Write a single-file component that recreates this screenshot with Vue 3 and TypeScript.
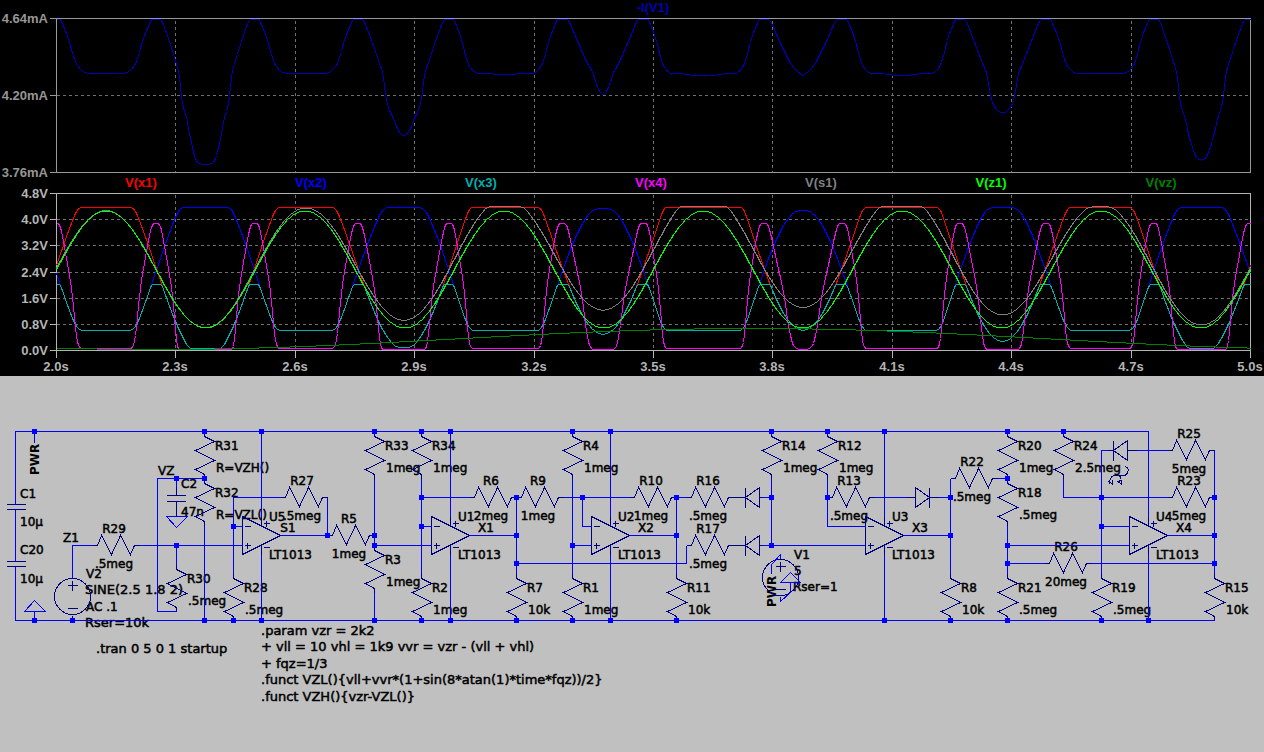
<script setup lang="ts">
type Pt = [number, number]

const X0 = 56
const X1 = 1250
const SECOND = 398

const timeTicks = [
  { x: 56, t: '2.0s' }, { x: 175, t: '2.3s' }, { x: 295, t: '2.6s' }, { x: 414, t: '2.9s' },
  { x: 534, t: '3.2s' }, { x: 653, t: '3.5s' }, { x: 772, t: '3.8s' }, { x: 892, t: '4.1s' },
  { x: 1011, t: '4.4s' }, { x: 1131, t: '4.7s' }, { x: 1250, t: '5.0s' },
]
const innerTicks = timeTicks.slice(1, -1)
const currentTicks = [{ y: 18, t: '4.64mA' }, { y: 95, t: '4.20mA' }, { y: 172, t: '3.76mA' }]
const voltTicks = [
  { y: 193, t: '4.8V' }, { y: 219, t: '4.0V' }, { y: 245, t: '3.2V' }, { y: 272, t: '2.4V' },
  { y: 298, t: '1.6V' }, { y: 324, t: '0.8V' }, { y: 350, t: '0.0V' },
]

/* Waveforms, expressed in canvas units (y grows downwards). */
const timeAt = (x: number) => 2 + (x - X0) / SECOND
const sine = (x: number) => 58.5 * Math.sin(4 * Math.PI * timeAt(x))
const drift = (x: number) => 10.5 + 10.5 * Math.sin((2 * Math.PI * timeAt(x)) / 3)
const drive = (x: number) => 1.6 * sine(x) + 1.5 * drift(x)

function smoothMax(a: number, b: number, k: number): number {
  const h = Math.max(k - Math.abs(a - b), 0) / k
  return Math.max(a, b) + (h * h * k) / 4
}
const smoothMin = (a: number, b: number, k: number) => -smoothMax(-a, -b, k)

function lookup(table: Pt[], v: number): number {
  if (v <= table[0][0]) return table[0][1]
  for (let i = 1; i < table.length; i++) {
    const [a, ya] = table[i - 1]
    const [b, yb] = table[i]
    if (v <= b) return ya + ((yb - ya) * (v - a)) / (b - a)
  }
  return table[table.length - 1][1]
}

const pulse: Pt[] = [[-62, 349], [-58, 345], [-53, 325], [-48, 300], [-43, 284], [-35, 266], [-21, 238], [-14, 227], [-8, 223],
  [8, 223], [14, 227], [21, 238], [35, 266], [43, 284], [50, 308], [55, 331], [60, 344], [66, 348]]
const supply: Pt[] = [[-93, 164], [-90, 162], [-88, 157], [-85, 146], [-82, 135], [-77, 118], [-72, 109], [-69, 102], [-67, 95],
  [-65, 85], [-62, 72], [-58, 66], [-50, 55], [-43, 46], [-32, 34], [-20, 22], [-14, 19], [14, 19], [20, 24], [31, 33], [42, 45],
  [47, 53], [57, 64], [64, 68], [71, 71], [80, 73], [104, 73], [120, 75]]

const x1 = (x: number) => smoothMin(smoothMax(267 - drive(x), 207, 8), 348, 4)
const x2 = (x: number) => smoothMin(smoothMax(271 + drive(x), 207, 8), 330, 12)
const x3 = (x: number) => smoothMax(Math.max(x1(x), x2(x)), 284, 4)
const x4 = (x: number) => lookup(pulse, drive(x))
const z1 = (x: number) => 269 - sine(x)
const s1 = (x: number) => smoothMax(269 - sine(x) - drift(x), 206, 4)
const vz = (x: number) => 349 - drift(x)
const iv1 = (x: number) => lookup(supply, drive(x))

function trace(f: (x: number) => number): string {
  const pts: string[] = []
  for (let x = X0; x <= X1; x += 1) pts.push(`${x},${Math.round(f(x))}`)
  return pts.join(' ')
}

const traces = [
  { name: 'V(x1)', color: '#ff0000', points: trace(x1) },
  { name: 'V(x2)', color: '#0000ff', points: trace(x2) },
  { name: 'V(x3)', color: '#00b0b0', points: trace(x3) },
  { name: 'V(x4)', color: '#ff00ff', points: trace(x4) },
  { name: 'V(s1)', color: '#808080', points: trace(s1) },
  { name: 'V(z1)', color: '#00ff00', points: trace(z1) },
  { name: 'V(vz)', color: '#008000', points: trace(vz) },
]
const currentTrace = trace(iv1)

/* Schematic */
interface Part { x: number; y: number; name: string; value: string }
const part = (name: string, value: string, x: number, y: number): Part => ({ name, value, x, y })

const uprights: Part[] = [
  part('R31', 'R=VZH()', 204, 431), part('R32', 'R=VZL()', 204, 478), part('R28', '.5meg', 233, 573),
  part('R30', '.5meg', 176, 564), part('R33', '1meg', 374, 431), part('R3', '1meg', 374, 545),
  part('R34', '1meg', 421, 431), part('R2', '1meg', 421, 573), part('R4', '1meg', 572, 431),
  part('R1', '1meg', 572, 573), part('R7', '10k', 516, 573), part('R11', '10k', 676, 573),
  part('R14', '1meg', 771, 431), part('R12', '1meg', 827, 431), part('R8', '10k', 950, 573),
  part('R20', '1meg', 1007, 431), part('R18', '.5meg', 1007, 478), part('R21', '.5meg', 1007, 573),
  part('R24', '2.5meg', 1063, 431), part('R19', '.5meg', 1101, 573), part('R15', '10k', 1214, 573),
]
const levels: Part[] = [
  part('R29', '.5meg', 92, 545), part('R27', '.5meg', 280, 497), part('R5', '1meg', 327, 535),
  part('R6', '2meg', 469, 497), part('R9', '1meg', 516, 497), part('R10', '1meg', 629, 497),
  part('R16', '.5meg', 686, 497), part('R17', '.5meg', 686, 545), part('R13', '.5meg', 827, 497),
  part('R22', '.5meg', 950, 478), part('R25', '5meg', 1167, 450), part('R23', '5meg', 1167, 497),
  part('R26', '20meg', 1044, 563),
]
const amps = [
  { name: 'U5', x: 242, out: 'S1', dx: 46 }, { name: 'U1', x: 431, out: 'X1', dx: 55 },
  { name: 'U2', x: 591, out: 'X2', dx: 55 }, { name: 'U3', x: 865, out: 'X3', dx: 55 },
  { name: 'U4', x: 1129, out: 'X4', dx: 55 },
]
const labels = [
  { x: 20, y: 498, t: 'C1' }, { x: 20, y: 526, t: '10µ' }, { x: 20, y: 554, t: 'C20' }, { x: 20, y: 583, t: '10µ' },
  { x: 181, y: 488, t: 'C2' }, { x: 181, y: 516, t: '47n' }, { x: 158, y: 475, t: 'VZ' }, { x: 63, y: 542, t: 'Z1' },
  { x: 794, y: 559, t: 'V1' }, { x: 794, y: 575, t: '5' }, { x: 793, y: 591, t: 'Rser=1' },
  { x: 86, y: 578, t: 'V2' }, { x: 86, y: 611, t: 'AC .1' },
]
const directives = [
  { x: 85, y: 594, t: 'SINE(2.5 1.8 2)' },
  { x: 85, y: 627, t: 'Rser=10k' },
  { x: 96, y: 653, t: '.tran 0 5 0 1 startup' },
  { x: 261, y: 635, t: '.param vzr = 2k2' },
  { x: 261, y: 651, t: '+ vll = 10 vhl = 1k9 vvr = vzr - (vll + vhl)' },
  { x: 261, y: 668, t: '+ fqz=1/3' },
  { x: 261, y: 684, t: '.funct VZL(){vll+vvr*(1+sin(8*atan(1)*time*fqz))/2}' },
  { x: 261, y: 701, t: '.funct VZH(){vzr-VZL()}' },
]

const wires = [
  'M15 504V431H1148V516', 'M15 509V561', 'M15 566V620H1214', 'M1214 450V573', 'M34 431V442', 'M34 611V620',
  'M92 545H72V578', 'M139 545H242', 'M176 545V564', 'M176 611H157V478H204', 'M176 478V486', 'M204 525V620',
  'M280 497H233V573', 'M327 497V535H280', 'M233 526H242', 'M374 478V545H431', 'M374 592V620',
  'M421 478V573', 'M421 526H431', 'M421 497H469', 'M469 535H516', 'M516 497V573', 'M516 563H686V545',
  'M563 497H629', 'M582 497V526H591', 'M572 478V573', 'M572 545H591', 'M629 535H676', 'M676 497V573',
  'M676 497H686', 'M762 497H771', 'M771 478V545H865', 'M762 545H771', 'M827 478V526H865', 'M874 497H906',
  'M938 497H950', 'M903 535H950', 'M950 478V573', 'M997 478H1007', 'M1007 525V573', 'M1007 545H1129',
  'M1007 563H1044', 'M1091 563H1214', 'M1063 478V497H1167', 'M1101 573V450H1107', 'M1101 526H1129',
  'M1136 450H1167', 'M1167 535H1214', 'M261 431V516', 'M450 431V516', 'M610 431V516', 'M884 431V516',
  'M261 554V620', 'M450 554V620', 'M610 554V620', 'M884 554V620', 'M1148 554V620',
  'M780 558V554L771 564V573', 'M790 582V592L780 601V596',
].join('')

const ports = 'M24 611H45L34 600ZM166 516H187L176 527ZM780 582H800L790 572Z'

const bodies = [
  'M6 504H25M6 509H25M6 561H25M6 566H25', 'M166 495H185M166 501H185M176 486V495M176 501V516',
  'M67 585H77M72 580V590M67 608H77M72 615V620', 'M775 566H785M780 561V571M775 589H785',
  'M733 497H745M745 487V507M745 497L759 487V507ZM759 497H762',
  'M733 545H745M745 535V555M745 545L759 535V555ZM759 545H762',
  'M906 497H915M915 487V507L929 497ZM929 487V507M929 497H938',
  'M1107 450H1113M1113 440V460M1113 450L1127 440V460ZM1127 450H1136',
].join('')

const emission =
  'M1125 466q4 2 2 6q-1 3 -4 3h-10q-4 2 -4 8M1107 481h2l3 3v-5' +
  'M1116 475q5 0 4 4l-2 4M1116 481h2l3 3v-5'

const joints: Pt[] = [
  [34, 431], [204, 431], [261, 431], [374, 431], [421, 431], [450, 431], [572, 431], [610, 431], [771, 431],
  [827, 431], [884, 431], [1007, 431], [1063, 431],
  [34, 620], [72, 620], [204, 620], [233, 620], [261, 620], [374, 620], [421, 620], [450, 620], [516, 620],
  [572, 620], [610, 620], [676, 620], [884, 620], [950, 620], [1007, 620], [1101, 620], [1148, 620],
  [176, 478], [204, 478], [1007, 478],
  [421, 497], [516, 497], [582, 497], [676, 497], [771, 497], [827, 497], [950, 497], [1101, 497], [1214, 497],
  [233, 526], [421, 526], [1101, 526],
  [327, 535], [374, 535], [516, 535], [676, 535], [950, 535], [1214, 535],
  [176, 545], [374, 545], [572, 545], [771, 545], [1007, 545],
  [516, 563], [1007, 563], [1214, 563],
]

const upright = (p: Part) => `M${p.x} ${p.y}v5l10 5l-19 9l19 10l-19 9l9 5v4`
const level = (p: Part) => `M${p.x} ${p.y}h5l4 -10l10 19l9 -19l10 19l4 -9h5`
const amp = (x: number) =>
  `M${x} 516V554L${x + 38} 535ZM${x + 19} 516v9M${x + 19} 545v9` +
  `M${x + 2} 526h6M${x + 2} 545h6M${x + 5} 542v6M${x + 21} 523h6M${x + 24} 520v6M${x + 21} 547h6`
</script>

<template>
  <main class="workspace">
    <section class="plots" aria-label="Waveforms">
      <h1 class="trace-title">-I(V1)</h1>
      <svg class="sheet dim" viewBox="0 16 1264 160" role="img" aria-label="Supply current">
        <g transform="translate(.5 .5)">
          <path class="grid" d="M56 95H1250" />
          <path v-for="t in innerTicks" :key="t.x" class="grid" :d="`M${t.x} 20V172`" />
          <path class="axis" d="M49 18H1250V172H49M56 18V172M49 95H56" />
          <polyline class="trace" :points="currentTrace" stroke="#0000b4" />
        </g>
        <text v-for="t in currentTicks" :key="t.y" class="tick end" x="48" :y="t.y + 5">{{ t.t }}</text>
      </svg>
      <ul class="legend">
        <li v-for="t in traces" :key="t.name" :style="{ color: t.color }">{{ t.name }}</li>
      </ul>
      <svg class="sheet" viewBox="0 190 1264 186" role="img" aria-label="Node voltages">
        <g transform="translate(.5 .5)">
          <path v-for="t in voltTicks.slice(1, -1)" :key="t.y" class="grid" :d="`M56 ${t.y}H1250`" />
          <path v-for="t in innerTicks" :key="t.x" class="grid" :d="`M${t.x} 194V350`" />
          <path class="axis" d="M56 193H1250V350H56Z" />
          <path v-for="t in voltTicks" :key="t.t" class="axis" :d="`M49 ${t.y}H56`" />
          <path v-for="t in timeTicks" :key="t.t" class="axis" :d="`M${t.x} 350V357`" />
          <polyline v-for="t in traces" :key="t.name" class="trace" :points="t.points" :stroke="t.color" />
        </g>
        <text v-for="t in voltTicks" :key="t.t" class="tick end" x="48" :y="t.y + 5">{{ t.t }}</text>
        <text v-for="t in timeTicks" :key="t.t" class="tick mid" :x="t.x" y="371">{{ t.t }}</text>
      </svg>
    </section>

    <section class="schematic" aria-label="Schematic">
      <svg class="sheet" viewBox="0 376 1264 376" role="img" aria-label="Circuit">
        <g class="labels">
          <template v-for="p in uprights" :key="p.name">
            <text :x="p.x + 11" :y="p.y + 19">{{ p.name }}</text>
            <text :x="p.x + 12" :y="p.y + 41">{{ p.value }}</text>
          </template>
          <template v-for="p in levels" :key="p.name">
            <text class="mid" :x="p.x + 22" :y="p.y - 12">{{ p.name }}</text>
            <text class="mid" :x="p.x + 22" :y="p.y + 23">{{ p.value }}</text>
          </template>
          <template v-for="a in amps" :key="a.name">
            <text :x="a.x + 27" y="521">{{ a.name }}</text>
            <text :x="a.x + 27" y="559">LT1013</text>
            <text class="mid" :x="a.x + a.dx" y="532">{{ a.out }}</text>
          </template>
          <text v-for="(l, i) in labels" :key="i" :x="l.x" :y="l.y">{{ l.t }}</text>
          <text class="flag" transform="translate(39 475) rotate(-90)">PWR</text>
          <text class="flag" transform="translate(776 607) rotate(-90)">PWR</text>
        </g>
        <g class="labels directives">
          <text v-for="d in directives" :key="d.t" :x="d.x" :y="d.y">{{ d.t }}</text>
        </g>
        <g transform="translate(.5 .5)">
          <g class="body">
            <path v-for="p in uprights" :key="p.name" :d="upright(p)" />
            <path v-for="p in levels" :key="p.name" :d="level(p)" />
            <path v-for="a in amps" :key="a.name" :d="amp(a.x)" />
            <path :d="bodies" />
            <path :d="emission" />
            <circle cx="72" cy="596" r="18" />
            <circle cx="780" cy="577" r="18" />
          </g>
          <path class="wire" :d="wires" />
          <path class="wire" :d="ports" />
        </g>
        <rect v-for="([x, y], i) in joints" :key="i" class="joint" :x="x - 2" :y="y - 2" width="5" height="5" />
      </svg>
    </section>
  </main>
</template>

<style>
body {
  margin: 0;
  background: #c0c0c0;
}
</style>

<style scoped>
.workspace {
  display: flex;
  flex-direction: column;
  min-height: 100vh;
  background: #c0c0c0;
  font-family: "Liberation Sans", Arial, sans-serif;
}
.plots {
  background: #000;
}
.sheet {
  display: block;
  width: 100%;
  height: auto;
  overflow: visible;
}
.trace-title,
.legend {
  margin: 0;
  padding: 0 14px 0 56px;
  font-size: 13px;
  font-weight: 700;
  text-align: center;
}
.trace-title {
  height: 16px;
  line-height: 16px;
  color: #0000b4;
}
.legend {
  display: flex;
  height: 14px;
  padding-right: 18px;
  line-height: 14px;
  list-style: none;
}
.legend li {
  flex: 1;
}
.axis,
.grid,
.trace,
.wire,
.body {
  fill: none;
  stroke-width: 1;
  shape-rendering: crispEdges;
}
.axis {
  stroke: #b4b4b4;
}
.dim .axis {
  stroke: #989898;
}
.grid {
  stroke: #707070;
  stroke-dasharray: 3 3;
}
.tick {
  font-size: 13px;
  font-weight: 700;
  fill: #b4b4b4;
}
.dim .tick {
  fill: #969696;
}
.end {
  text-anchor: end;
}
.mid {
  text-anchor: middle;
}
.labels {
  font-family: "DejaVu Sans", Verdana, sans-serif;
  font-size: 12px;
  fill: #000;
  stroke: #000;
  stroke-width: 0.5;
}
.directives {
  font-size: 13px;
}
.flag {
  font-weight: 700;
  stroke: none;
}
.wire {
  stroke: #0000ff;
}
.body {
  stroke: #000080;
}
.joint {
  fill: #0000ff;
}
</style>
